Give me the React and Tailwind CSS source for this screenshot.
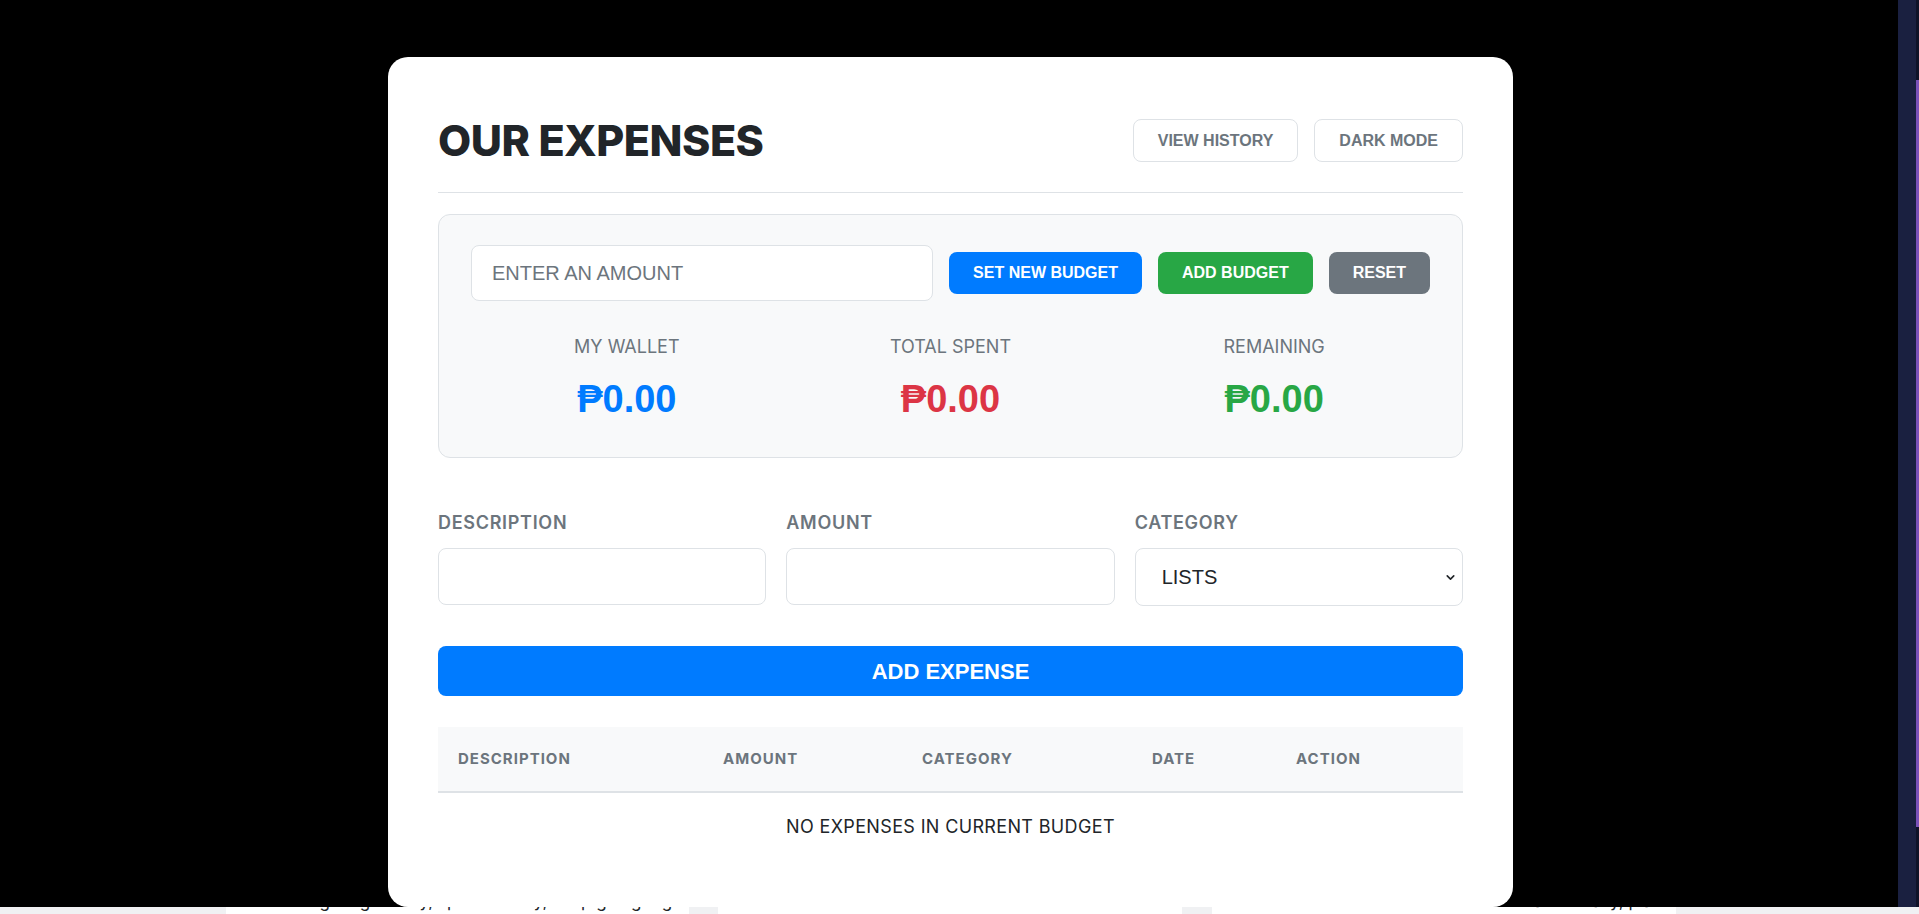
import { ChevronDown } from 'lucide-react';

const sans = "font-['Liberation_Sans',Arial,sans-serif]";
const geo = "font-['Inter',sans-serif]";

const stats = [
  { label: 'MY WALLET', value: '₱0.00', color: 'text-[#007bff]' },
  { label: 'TOTAL SPENT', value: '₱0.00', color: 'text-[#dc3545]' },
  { label: 'REMAINING', value: '₱0.00', color: 'text-[#28a745]' },
];

const columns = [
  { label: 'DESCRIPTION', width: 'w-[265px]' },
  { label: 'AMOUNT', width: 'w-[199px]' },
  { label: 'CATEGORY', width: 'w-[230px]' },
  { label: 'DATE', width: 'w-[144px]' },
  { label: 'ACTION', width: '' },
];

function Field({ label, children }) {
  return (
    <div className="flex flex-col">
      <label className={`${geo} text-[18px] leading-[27px] font-semibold text-[#6c757d] tracking-[0.7px] mb-[12px]`}>{label}</label>
      {children}
    </div>
  );
}

function ExpenseModal() {
  return (
    <div className="ml-[388px] mt-[57px] w-[1125px] h-[850px] rounded-[20px] bg-white px-[50px] pt-[57px]">
      <div className="flex items-center justify-between h-[53px]">
        <h1 className={`${geo} text-[43px] leading-[53px] font-extrabold text-[#212529] tracking-[-0.5px]`}>OUR EXPENSES</h1>
        <div className={`flex gap-4 ${sans}`}>
          <button className="h-[43px] px-6 rounded-lg border border-[#dee2e6] bg-white text-base font-bold text-[#6c757d]">VIEW HISTORY</button>
          <button className="h-[43px] px-6 rounded-lg border border-[#dee2e6] bg-white text-base font-bold text-[#6c757d]">DARK MODE</button>
        </div>
      </div>
      <div className="border-b border-[#dee2e6] pt-[25px]" />

      <div className="mt-[21px] h-[244px] rounded-xl border border-[#dee2e6] bg-[#f8f9fa] px-8 pt-[30px]">
        <div className={`flex items-center gap-4 ${sans}`}>
          <input
            placeholder="ENTER AN AMOUNT"
            className="flex-1 h-[56px] rounded-lg border border-[#dee2e6] bg-white px-5 text-[20px] text-[#212529] placeholder:text-[#6c757d] outline-none"
          />
          <button className="h-[42px] px-6 rounded-lg bg-[#007bff] text-base font-bold text-white">SET NEW BUDGET</button>
          <button className="h-[42px] px-6 rounded-lg bg-[#28a745] text-base font-bold text-white">ADD BUDGET</button>
          <button className="h-[42px] px-6 rounded-lg bg-[#6c757d] text-base font-bold text-white">RESET</button>
        </div>
        <div className="grid grid-cols-3 mt-[32px] -mx-[6px]">
          {stats.map((s) => (
            <div key={s.label} className="flex flex-col items-center">
              <div className={`${geo} text-[18px] leading-[27px] text-[#6c757d]`}>{s.label}</div>
              <div className={`${sans} mt-[19px] text-[38px] leading-[41px] font-bold ${s.color}`}>{s.value}</div>
            </div>
          ))}
        </div>
      </div>

      <div className="mt-[51px] grid grid-cols-3 gap-5">
        <Field label="DESCRIPTION">
          <input className="h-[57px] rounded-lg border border-[#dee2e6] bg-white px-5 outline-none" />
        </Field>
        <Field label="AMOUNT">
          <input className="h-[57px] rounded-lg border border-[#dee2e6] bg-white px-5 outline-none" />
        </Field>
        <Field label="CATEGORY">
          <div className="relative">
            <select className={`${sans} w-full h-[58px] appearance-none rounded-lg border border-[#dee2e6] bg-white pl-[26px] text-[20px] text-[#212529] outline-none`}>
              <option>LISTS</option>
            </select>
            <ChevronDown className="absolute right-[6px] top-[23px] w-[13px] h-[13px] text-[#212529] pointer-events-none" strokeWidth={3} />
          </div>
        </Field>
      </div>

      <button className={`${sans} mt-[40px] w-full h-[50px] rounded-lg bg-[#007bff] text-[22px] font-bold text-white`}>ADD EXPENSE</button>

      <table className="mt-[31px] w-full border-collapse">
        <thead>
          <tr className="bg-[#f8f9fa] border-b-2 border-[#dee2e6]">
            {columns.map((c) => (
              <th
                key={c.label}
                className={`${geo} ${c.width} h-[65px] px-5 text-left text-[15px] font-bold text-[#6c757d] tracking-[1px]`}
              >
                {c.label}
              </th>
            ))}
          </tr>
        </thead>
        <tbody>
          <tr>
            <td colSpan={5} className={`${geo} py-5 text-center text-[18px] leading-[27px] text-[#212529] tracking-[0.35px]`}>
              NO EXPENSES IN CURRENT BUDGET
            </td>
          </tr>
        </tbody>
      </table>
    </div>
  );
}

export default function App() {
  return (
    <div className="w-[1919px] h-[914px] overflow-hidden flex flex-col bg-white">
      <div className="flex h-[907px]">
        <div className="flex-1 bg-black overflow-hidden">
          <ExpenseModal />
        </div>
        <div className="w-[21px] bg-[#1a2040] flex justify-end">
          <div className="w-[3px] flex flex-col">
            <div className="h-[80px] bg-[#0f1328]" />
            <div className="h-[747px] bg-[#7b52b8]" />
            <div className="flex-1 bg-[#0f1328]" />
          </div>
        </div>
      </div>
      <div className={`h-[7px] flex overflow-hidden ${geo} text-[17px] leading-[20px] text-[#212529]`}>
        <div className="w-[226px] bg-[#f0f1f3]" />
        <div className="w-[463px] bg-white overflow-hidden">
          <div className="-mt-[16px] pl-[62px] whitespace-nowrap">Budgeting money, spend wisely, keep going together</div>
        </div>
        <div className="w-[29px] bg-[#f0f1f3]" />
        <div className="w-[464px] bg-white" />
        <div className="w-[30px] bg-[#f0f1f3]" />
        <div className="w-[464px] bg-white overflow-hidden">
          <div className="-mt-[16px] pl-[310px] whitespace-nowrap">track it daily, plan</div>
        </div>
        <div className="flex-1 bg-[#f0f1f3]" />
      </div>
    </div>
  );
}
